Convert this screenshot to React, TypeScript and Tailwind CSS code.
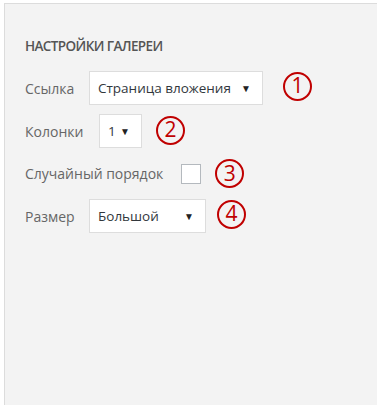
import React from "react";

const font = { fontFamily: '"Open Sans", "Noto Sans", sans-serif' };

function Marker({ n, className = "" }: { n: number; className?: string }) {
  return (
    <span
      className={`flex h-[29px] w-[29px] items-center justify-center rounded-full border-2 border-[#c00000] text-[21px] leading-none text-[#c00000] ${className}`}
    >
      <span className="-mt-[1px]">{n}</span>
    </span>
  );
}

function Select({ value, width }: { value: string; width: string }) {
  return (
    <div
      className={`flex h-[34px] ${width} items-center justify-between whitespace-nowrap border border-[#dddddd] bg-white pl-[8px] pr-[11px] text-[13.5px] text-[#32373c]`}
    >
      <span>{value}</span>
      <span className="text-[10px] text-[#222]">▼</span>
    </div>
  );
}

export default function App() {
  return (
    <div className="h-[405px] w-[378px] bg-white pt-[3px] pl-[4px] pr-[1px]" style={font}>
      <div className="h-full border-t border-l border-[#dcdcdc] bg-[#f3f3f3] pl-[20px] pt-[32px]">
        <h2 className="text-[13.5px] font-semibold leading-[20px] tracking-[-0.6px] text-[#555]">
          НАСТРОЙКИ ГАЛЕРЕИ
        </h2>
        <div className="mt-[15px] flex flex-col gap-[9px] text-[14px] text-[#666]">
          <div className="flex items-center">
            <span className="w-[64px]">Ссылка</span>
            <Select value="Страница вложения" width="w-[174px]" />
            <Marker n={1} className="ml-[20px] -mt-[4px]" />
          </div>
          <div className="flex items-center">
            <span className="w-[74px]">Колонки</span>
            <Select value="1" width="w-[43px]" />
            <Marker n={2} className="ml-[14px] -mt-[2px]" />
          </div>
          <div className="flex h-[33px] items-center">
            <span className="mr-[18px]">Случайный порядок</span>
            <span className="h-[20px] w-[20px] border border-[#b4b9be] bg-white" />
            <Marker n={3} className="ml-[14px]" />
          </div>
          <div className="flex items-center">
            <span className="w-[64px]">Размер</span>
            <Select value="Большой" width="w-[117px]" />
            <Marker n={4} className="ml-[11px] -mt-[4px]" />
          </div>
        </div>
      </div>
    </div>
  );
}
